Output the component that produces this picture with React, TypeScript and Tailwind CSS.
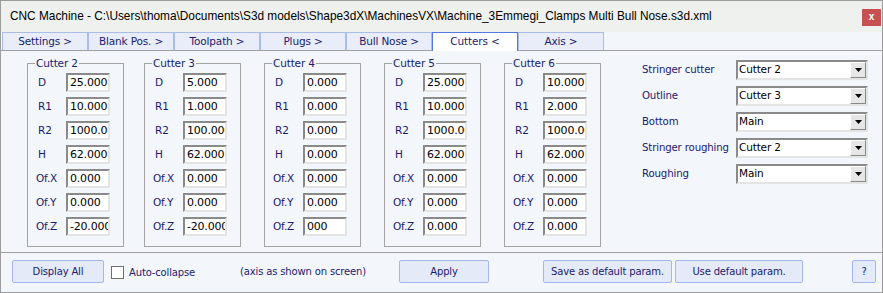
import React from "react";

const cutters = [
  { name: "Cutter 2", v: ["25.000", "10.000", "1000.000", "62.000", "0.000", "0.000", "-20.000"], ml: "ml-[26px]" },
  { name: "Cutter 3", v: ["5.000", "1.000", "100.000", "62.000", "0.000", "0.000", "-20.000"], ml: "ml-[20px]" },
  { name: "Cutter 4", v: ["0.000", "0.000", "0.000", "0.000", "0.000", "0.000", "000"], ml: "ml-[23px]" },
  { name: "Cutter 5", v: ["25.000", "10.000", "1000.000", "62.000", "0.000", "0.000", "0.000"], ml: "ml-[23px]" },
  { name: "Cutter 6", v: ["10.000", "2.000", "1000.000", "62.000", "0.000", "0.000", "0.000"], ml: "ml-[23px]" },
];
const labels = ["D", "R1", "R2", "H", "Of.X", "Of.Y", "Of.Z"];
const tabs = ["Settings >", "Blank Pos. >", "Toolpath >", "Plugs >", "Bull Nose >", "Cutters <", "Axis >"];
const combos = [
  ["Stringer cutter", "Cutter 2"],
  ["Outline", "Cutter 3"],
  ["Bottom", "Main"],
  ["Stringer roughing", "Cutter 2"],
  ["Roughing", "Main"],
];

function Field({ value }: { value: string }) {
  return (
    <input
      readOnly
      value={value}
      className="w-[44px] h-[19px] bg-white border-2 border-t-[#8a8a8a] border-l-[#8a8a8a] border-r-[#e4e4e4] border-b-[#e4e4e4] pl-[2px] text-black text-[11px] tracking-[-0.2px] outline-none font-['DejaVu_Sans',sans-serif]"
    />
  );
}

function Group({ name, v, ml }: { name: string; v: string[]; ml: string }) {
  return (
    <fieldset className={`${ml} mt-[6px] w-[97px] h-[190px] border border-[#a3a3a3] pt-[4px] pb-[9px] flex flex-col gap-[5px]`}>
      <legend className="ml-[7px] px-[1px] leading-[12px] text-[10.5px] text-[#1b1b6f]">{name}</legend>
      {labels.map((l, i) => (
        <div key={l} className="flex items-center h-[19px]">
          <span className={`${i < 4 ? "pl-[10px]" : "pl-[8px]"} w-[38px] text-[10.5px] text-[#1b1b6f]`}>{l}</span>
          <Field value={v[i]} />
        </div>
      ))}
    </fieldset>
  );
}

function Combo({ value }: { value: string }) {
  return (
    <div className="w-[132px] h-[20px] bg-white border-2 border-t-[#8a8a8a] border-l-[#8a8a8a] border-r-[#e4e4e4] border-b-[#e4e4e4] flex items-center justify-between">
      <span className="pl-[1px] text-black text-[10.5px]">{value}</span>
      <div className="w-[16px] h-[16px] bg-[#e6e6e6] border border-t-white border-l-white border-r-[#888888] border-b-[#888888] flex items-center justify-center">
        <svg width="7" height="4" viewBox="0 0 7 4">
          <path d="M0 0 H7 L3.5 4 Z" fill="#000" />
        </svg>
      </div>
    </div>
  );
}

function Btn({ children, cls }: { children: React.ReactNode; cls: string }) {
  return (
    <div className={`${cls} h-[23px] rounded-[2px] bg-[#e4eaf8] border border-[#a3b5ea] flex items-center justify-center text-[#1b1b6f]`}>
      {children}
    </div>
  );
}

export default function App() {
  return (
    <div className="w-[883px] h-[293px] border border-[#9c9c9c] bg-[#f3f6fb] flex flex-col overflow-hidden font-['DejaVu_Sans',sans-serif] text-[10px] tracking-[-0.15px] text-[#1b1b6f]">
      <div className="h-[31px] shrink-0 bg-[#eef1ee] flex items-start justify-between">
        <div className="pl-[9px] pt-[7px] text-[11.85px] leading-[17px] tracking-normal text-black font-['Liberation_Sans',Arial,sans-serif]">
          CNC Machine - C:\Users\thoma\Documents\S3d models\Shape3dX\MachinesVX\Machine_3Emmegi_Clamps Multi Bull Nose.s3d.xml
        </div>
        <div className="mt-[8px] mr-[1px] w-[19px] h-[17px] bg-[#c75050] flex items-center justify-center text-white text-[10px] font-bold font-['Liberation_Sans',Arial,sans-serif] tracking-normal leading-none pb-[1px]">
          x
        </div>
      </div>
      <div className="h-[18px] shrink-0 flex items-start pl-[1px] relative z-10">
        {tabs.map((t) =>
          t === "Cutters <" ? (
            <div key={t} className="w-[86px] h-[19px] bg-white border border-b-0 border-[#5579e2] flex items-center justify-center text-[#1b1b6f] text-[10.5px] pb-[1px]">
              {t}
            </div>
          ) : (
            <div key={t} className="w-[86px] h-[18px] bg-[#e8edf9] border border-b-0 border-[#aabde9] flex items-center justify-center text-[#1b1b6f] text-[10.5px]">
              {t}
            </div>
          )
        )}
      </div>
      <div className="h-[203px] shrink-0 border-t border-b border-[#a0a0a0] flex items-start">
        {cutters.map((c) => (
          <Group key={c.name} {...c} />
        ))}
        <div className="ml-[41px] pt-[9px] flex flex-col gap-[6px]">
          {combos.map(([l, v]) => (
            <div key={l} className="flex items-center h-[20px]">
              <span className="w-[94px] text-[#1b1b6f] text-[10.2px]">{l}</span>
              <Combo value={v} />
            </div>
          ))}
        </div>
      </div>
      <div className="flex-1 flex items-start pt-[7px]">
        <Btn cls="ml-[11px] w-[92px]">Display All</Btn>
        <div className="ml-[7px] w-[129px] h-[23px] flex items-center">
          <div className="w-[13px] h-[13px] bg-white border border-[#6f6f6f] mt-[1px]" />
          <span className="ml-[5px] text-[#1b1b6f] mt-[1px]">Auto-collapse</span>
        </div>
        <div className="w-[159px] h-[23px] flex items-center text-[#1b1b6f]">(axis as shown on screen)</div>
        <Btn cls="w-[90px]">Apply</Btn>
        <Btn cls="ml-[54px] w-[129px]">Save as default param.</Btn>
        <Btn cls="ml-[3px] w-[128px]">Use default param.</Btn>
        <Btn cls="ml-[49px] w-[24px]">?</Btn>
      </div>
    </div>
  );
}
